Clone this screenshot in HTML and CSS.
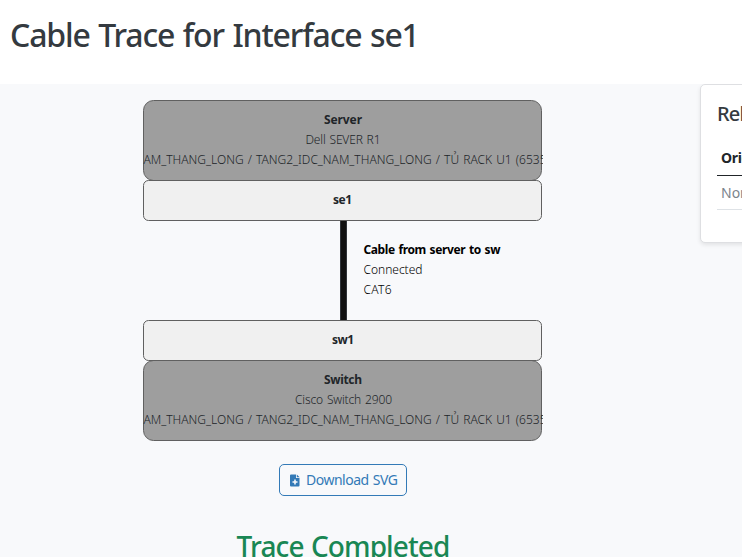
FILE: index.html
```html
<!DOCTYPE html>
<html lang="en">
<head>
<meta charset="utf-8">
<title>Cable Trace for Interface se1</title>
<link rel="stylesheet" href="styles.css">
</head>
<body>
<header class="page-header"><h1 class="page-title">Cable Trace for Interface se1</h1></header>
<main class="content">
  <section class="trace">
    <svg class="trace-diagram" width="400" height="342" viewBox="0 0 400 342">
      <rect class="device" x=".5" y=".5" width="398" height="80" rx="10"/>
      <text class="bold" x="181" y="24" textLength="38">Server</text>
      <text x="162.500" y="44" textLength="75">Dell SEVER R1</text>
      <text x="0.500" y="64" textLength="403">AM_THANG_LONG / TANG2_IDC_NAM_THANG_LONG / TỦ RACK U1 (6535</text>
      <rect class="termination" x=".5" y="80.500" width="398" height="40" rx="5"/>
      <text class="bold" x="190" y="104" textLength="19">se1</text>
      <rect class="cable-edge" x="197" y="121" width="7" height="99"/>
      <rect class="cable" x="198" y="121" width="5" height="99"/>
      <text class="bold cable-label" x="220.500" y="154" textLength="137">Cable from server to sw</text>
      <text class="cable-label" x="220.500" y="174" textLength="59">Connected</text>
      <text class="cable-label" x="220.500" y="194" textLength="28">CAT6</text>
      <rect class="device" x=".5" y="260.500" width="398" height="80" rx="10"/>
      <rect class="termination" x=".5" y="220.500" width="398" height="40" rx="5"/>
      <text class="bold" x="189" y="244" textLength="22">sw1</text>
      <text class="bold" x="181" y="284" textLength="38">Switch</text>
      <text x="152" y="304" textLength="97">Cisco Switch 2900</text>
      <text x="0.500" y="324" textLength="403">AM_THANG_LONG / TANG2_IDC_NAM_THANG_LONG / TỦ RACK U1 (6535</text>
    </svg>
    <a class="download" href="#">
      <svg class="download-icon" width="10" height="13" viewBox="0 0 10 13"><path fill-rule="evenodd" d="M1 .5h5V4h3.500v7.500a1 1 0 0 1-1 1h-7.500a1 1 0 0 1-1-1v-10a1 1 0 0 1 1-1zM6.800.5 9.700 3.300H6.800zM4.200 5.500v1.700H2.500v1.500h1.700v1.700h1.600V8.700h1.700V7.200H5.800V5.500z"/></svg>
      <svg class="download-text" width="92" height="20" viewBox="0 0 92 20"><text x="0" y="15" textLength="92">Download SVG</text></svg>
    </a>
    <h3 class="status">Trace Completed</h3>
  </section>
  <aside class="card">
    <h5 class="card-title">Related Paths</h5>
    <table class="paths">
      <thead><tr><th>Origin</th></tr></thead>
      <tbody><tr><td>None found</td></tr></tbody>
    </table>
  </aside>
</main>
</body>
</html>
```
FILE: styles.css
```css
* { box-sizing: border-box; }
html, body { height: 100%; }
body { margin: 0; overflow: hidden; background: #fff; color: #343a40; font-family: "Segoe UI", "Noto Sans", "Open Sans", sans-serif; display: flex; flex-direction: column; }
.page-header { height: 84px; flex: none; padding: 14px 10px; }
.page-title { margin: 0; font-size: 32px; line-height: 41px; font-weight: 500; letter-spacing: -1.15px; word-spacing: 1.400px; white-space: nowrap; }
.content { flex: 1; min-height: 0; overflow: hidden; background: #f8f9fb; display: flex; align-items: flex-start; }
.trace { width: 686px; flex: none; padding-top: 16px; display: flex; flex-direction: column; align-items: center; }
.trace-diagram { display: block; overflow: hidden; font-size: 12px; font-weight: 300; word-spacing: 1px; fill: #212529; }
.device { fill: #9e9e9e; stroke: #606060; }
.termination { fill: #f0f0f0; stroke: #606060; }
.cable-edge { fill: #303439; }
.cable { fill: #111; }
.bold { font-weight: 700; }
.cable-label { fill: #000; }
.download { margin-top: 22px; width: 128px; height: 32px; border: 1px solid #337ab7; border-radius: 5px; display: flex; align-items: center; padding: 0 8px 0 10px; color: #337ab7; text-decoration: none; }
.download-icon { fill: #337ab7; flex: none; margin-right: 6px; }
.download-text { fill: #337ab7; font-size: 14px; word-spacing: 1px; flex: none; overflow: visible; }
.status { margin: 31px 0 0; font-size: 28px; line-height: 38px; font-weight: 500; letter-spacing: -.900px; word-spacing: 1px; color: #198754; white-space: nowrap; }
.card { flex: none; margin-left: 14px; width: 340px; height: 159px; padding: 16px; background: #fff; border: 1px solid #dedfe2; border-radius: 5px; box-shadow: 0 2px 4px rgba(0,0,0,.09); }
.card-title { margin: 0; font-size: 20px; line-height: 26px; font-weight: 500; letter-spacing: -.8px; }
.paths { width: 100%; margin-top: 14px; border-collapse: collapse; font-size: 14px; }
.paths th { height: 34px; padding: 0 4px; text-align: left; color: #212529; font-weight: 700; letter-spacing: -.3px; border-bottom: 1px solid #212529; }
.paths td { height: 34px; padding: 0 4px; color: #7b848c; border-bottom: 1px solid #dee2e6; }
```
